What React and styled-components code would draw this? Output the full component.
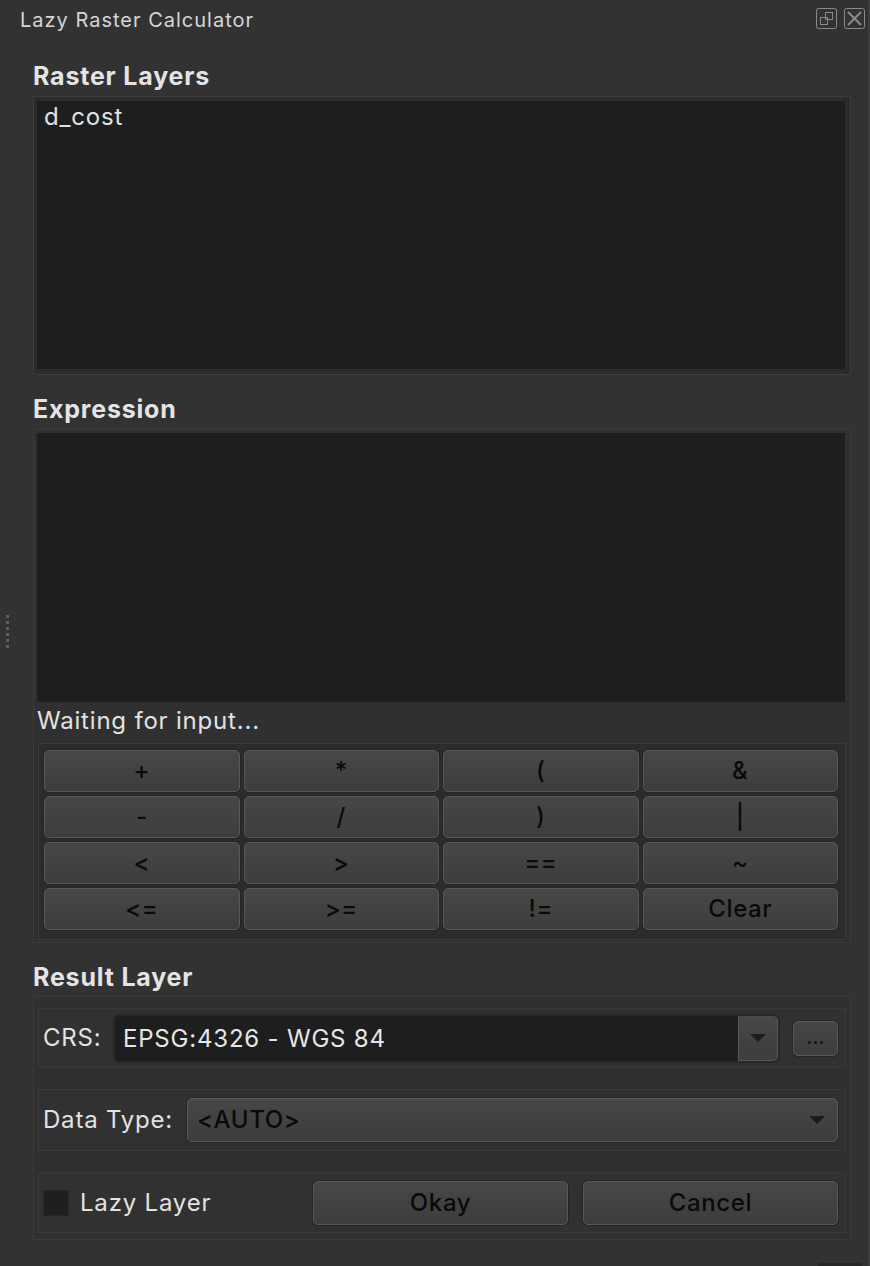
import React from 'react';
import styled, { createGlobalStyle } from 'styled-components';

const FONT = `Inter, "Liberation Sans", "DejaVu Sans", sans-serif`;

const Global = createGlobalStyle`
  html, body { margin: 0; padding: 0; background: #323232; overflow: hidden; }
  #root { width: 870px; height: 1266px; }
  * { box-sizing: border-box; }
`;

const textLook = `
  font-size: 24px;
  letter-spacing: 0.8px;
  line-height: 28px;
  color: #e2e2e2;
`;

const Panel = styled.div`
  width: 870px;
  height: 1266px;
  background: #323232;
  border-right: 2px solid #3e3e3e;
  display: flex;
  flex-direction: column;
  font-family: ${FONT};
`;

const TitleBar = styled.div`
  height: 42px;
  flex: none;
  display: flex;
  align-items: flex-start;
  justify-content: space-between;
  padding: 8px 3px 0 20px;
`;

const Title = styled.div`
  font-size: 20px;
  letter-spacing: 1px;
  line-height: 24px;
  color: #d6d6d6;
`;

const TitleIcons = styled.div`
  display: flex;
  gap: 7px;
`;

const Body = styled.div`
  flex: 1;
  display: flex;
  min-height: 0;
`;

const Gutter = styled.div`
  width: 33px;
  flex: none;
  display: flex;
  flex-direction: column;
  justify-content: center;
  padding-left: 6px;
`;

const Grip = styled.div`
  display: flex;
  flex-direction: column;
  gap: 3px;
  margin-bottom: 42px;
`;

const GripDot = styled.span`
  width: 3px;
  height: 3px;
  background: #5e5e5e;
`;

const Content = styled.div`
  width: 818px;
  flex: none;
  display: flex;
  flex-direction: column;
`;

const SectionTitle = styled.div`
  margin: 20px 0 ${p => p.$after ?? 6}px;
  font-size: 25px;
  letter-spacing: 0.8px;
  line-height: 28px;
  font-weight: 700;
  color: #e4e4e4;
`;

const ListFrame = styled.div`
  height: 279px;
  border: 1px solid #3d3d3d;
  border-right-color: #3f3f3f;
  background: #2b2b2b;
  padding: 4px 5px 5px 3px;
`;

const ListView = styled.div`
  height: 100%;
  background: #1e1e1e;
  padding: 2px 7px;
`;

const ListItem = styled.div`
  ${textLook}
`;

const Group = styled.div`
  border: 1px solid #3a3a3a;
  background: #303030;
  padding: ${p => p.$pad};
  display: flex;
  flex-direction: column;
  gap: ${p => p.$gap || 0}px;
`;

const TextEdit = styled.div`
  height: 269px;
  background: #1e1e1e;
`;

const Status = styled.div`
  ${textLook}
  margin: 5px 0 8px;
`;

const KeyFrame = styled.div`
  margin: 0 -1px 0 1px;
  height: 197px;
  border: 1px solid #3a3a3a;
  background: #2c2c2c;
  padding: 6px 7px 9px 5px;
  display: grid;
  grid-template-columns: repeat(4, 1fr);
  grid-auto-rows: 42px;
  gap: 4px;
`;

const buttonLook = `
  border: 1px solid #595959;
  border-radius: 5px;
  background: linear-gradient(#474747, #3d3d3d);
  box-shadow: 0 0 0 1px #252525;
  color: #0a0a0a;
  font-family: ${FONT};
  font-size: 24px;
  font-weight: 500;
  letter-spacing: 0.6px;
  padding: 0;
  margin: 0;
`;

const Key = styled.button`
  ${buttonLook}
  height: 42px;
  line-height: 40px;
`;

const RowFrame = styled.div`
  height: ${p => p.$h}px;
  border: 1px solid #3a3a3a;
  background: #313131;
  display: flex;
  align-items: center;
  padding: 0 7px 0 4px;
`;

const FieldLabel = styled.div`
  ${textLook}
  width: ${p => p.$w}px;
  flex: none;
`;

const CrsCombo = styled.div`
  flex: 1;
  height: 45px;
  display: flex;
  border-radius: 5px;
  box-shadow: 0 0 0 2px #272727;
`;

const CrsText = styled.div`
  ${textLook}
  flex: 1;
  background: #1e1e1e;
  border-radius: 4px 0 0 4px;
  padding-left: 8px;
  line-height: 45px;
  color: #e6e6e6;
`;

const ArrowButton = styled.div`
  width: 40px;
  display: flex;
  align-items: center;
  justify-content: center;
  background: linear-gradient(#474747, #3d3d3d);
  border: 1px solid #585858;
  border-top-color: #4a4a4a;
  border-radius: 0 5px 5px 0;
`;

const Arrow = styled.span`
  width: 0;
  height: 0;
  border-left: 8px solid transparent;
  border-right: 8px solid transparent;
  border-top: 8px solid #1c1c1c;
`;

const MoreButton = styled.button`
  ${buttonLook}
  width: 45px;
  height: 35px;
  margin-left: 15px;
  display: flex;
  align-items: center;
  justify-content: center;
  gap: 3px;
  padding-top: 8px;
`;

const Dot = styled.span`
  width: 3px;
  height: 3px;
  border-radius: 50%;
  background: #111;
`;

const SelectBox = styled.div`
  ${buttonLook}
  flex: 1;
  height: 44px;
  display: flex;
  align-items: center;
  justify-content: space-between;
  padding: 0 12px 0 9px;
  line-height: 42px;
`;

const Check = styled.div`
  width: 26px;
  height: 26px;
  flex: none;
  background: #1f1f1f;
  border: 1px solid #272727;
`;

const CheckLabel = styled.div`
  ${textLook}
  flex: 1;
  margin-left: 11px;
`;

const ActionButton = styled.button`
  ${buttonLook}
  width: 255px;
  height: 44px;
  margin-left: ${p => p.$ml || 0}px;
`;

const Footer = styled.div`
  height: 3px;
  flex: none;
  display: flex;
  justify-content: flex-end;
  padding-right: 6px;
`;

const Tab = styled.div`
  width: 44px;
  height: 3px;
  background: #272727;
  border-radius: 6px 6px 0 0;
`;

const FloatIcon = () => (
  <svg width="21" height="21" viewBox="0 0 21 21" fill="none" stroke="#8a8a8a" strokeWidth="1">
    <rect x="0.5" y="0.5" width="20" height="20" rx="2" />
    <rect x="9.5" y="4.5" width="7" height="7" />
    <rect x="4.5" y="9.5" width="7" height="7" />
  </svg>
);

const CloseIcon = () => (
  <svg width="21" height="21" viewBox="0 0 21 21" fill="none" stroke="#8a8a8a">
    <rect x="0.5" y="0.5" width="20" height="20" rx="2" strokeWidth="1" />
    <path d="M4 4 L17 17 M17 4 L4 17" strokeWidth="2" />
  </svg>
);

const keys = ['+', '*', '(', '&', '-', '/', ')', '|', '<', '>', '==', '~', '<=', '>=', '!=', 'Clear'];

export default function App() {
  return (
    <>
      <Global />
      <Panel>
        <TitleBar>
          <Title>Lazy Raster Calculator</Title>
          <TitleIcons>
            <FloatIcon />
            <CloseIcon />
          </TitleIcons>
        </TitleBar>
        <Body>
          <Gutter>
            <Grip>
              {[0, 1, 2, 3, 4, 5].map(i => <GripDot key={i} />)}
            </Grip>
          </Gutter>
          <Content>
            <SectionTitle>Raster Layers</SectionTitle>
            <ListFrame>
              <ListView>
                <ListItem>d_cost</ListItem>
              </ListView>
            </ListFrame>

            <SectionTitle>Expression</SectionTitle>
            <Group $pad="3px 5px 2px 3px">
              <TextEdit />
              <Status>Waiting for input...</Status>
              <KeyFrame>
                {keys.map(k => <Key key={k}>{k}</Key>)}
              </KeyFrame>
            </Group>

            <SectionTitle $after={5}>Result Layer</SectionTitle>
            <Group $pad="11px 4px 6px 4px" $gap={21}>
              <RowFrame $h={60}>
                <FieldLabel $w={72}>CRS:</FieldLabel>
                <CrsCombo>
                  <CrsText>EPSG:4326 - WGS 84</CrsText>
                  <ArrowButton><Arrow /></ArrowButton>
                </CrsCombo>
                <MoreButton><Dot /><Dot /><Dot /></MoreButton>
              </RowFrame>
              <RowFrame $h={62}>
                <FieldLabel $w={144}>Data Type:</FieldLabel>
                <SelectBox>
                  <span>&lt;AUTO&gt;</span>
                  <Arrow />
                </SelectBox>
              </RowFrame>
              <RowFrame $h={61}>
                <Check />
                <CheckLabel>Lazy Layer</CheckLabel>
                <ActionButton>Okay</ActionButton>
                <ActionButton $ml={15}>Cancel</ActionButton>
              </RowFrame>
            </Group>
          </Content>
        </Body>
        <Footer><Tab /></Footer>
      </Panel>
    </>
  );
}
